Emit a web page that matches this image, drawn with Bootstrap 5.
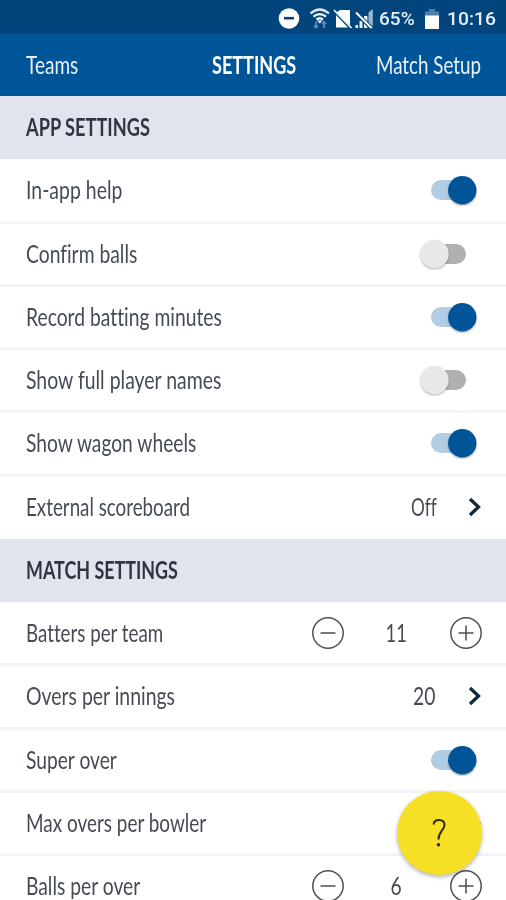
<!DOCTYPE html>
<html lang="en">
<head>
<meta charset="utf-8">
<meta name="viewport" content="width=device-width, initial-scale=1">
<title>Settings</title>
<link href="https://cdn.jsdelivr.net/npm/bootstrap@5.3.0/dist/css/bootstrap.min.css" rel="stylesheet">
<style>
  html, body { height: 900px; overflow: hidden; }
  body { font-family: Lato, "Open Sans", sans-serif; font-size: 24.5px; line-height: 30px; color: #454b55; background: #fff; font-variant-ligatures: none; }
  .screen { width: 506px; height: 900px; }
  .status-bar { height: 34px; background: #02457c; padding: 3px 10px 0 0; font-family: Roboto, sans-serif; font-size: 18.5px; font-weight: 500; color: #e6eef6; }
  .status-battery { margin: 0 7px 0 9px; }
  .title-bar { height: 62px; background: #005599; padding: 0 25px 0 26px; color: #e9f2fa; }
  .title-bar .title { font-weight: 700; color: #fff; width: 84px; margin-left: -15px; }
  .section-head { height: 63.25px; background: #e1e4ed; padding: 0 0 1px 26px; font-weight: 700; color: #2f3642; }
  .setting { height: 63.25px; padding: 0 24px 0 26px; border-top: 1px solid #f3f4f7; border-bottom: 2px solid #f3f4f7; }
  .section-head + .setting { border-top-color: #fff; }
  .setting.last { border-bottom-color: #fff; }
  .fit { display: inline-block; white-space: nowrap; transform-origin: left center; }
  .slot { display: inline-block; white-space: nowrap; }
  .toggle { width: 46px; height: 32px; margin-right: 5px; }
  .toggle.off { margin-right: 15px; width: 48px; }
  .count { width: 104px; padding-right: 1px; }
  .step-plus { margin-right: -1px; }
  .help-btn { position: absolute; left: 397px; top: 790.5px; width: 84.5px; height: 84.5px; background: #f6e026; box-shadow: 0 2px 4px rgba(0,0,0,.3); border: 0; }
</style>
</head>
<body>
<svg width="0" height="0" class="position-absolute">
  <defs>
    <filter id="soft" x="-30%" y="-30%" width="160%" height="160%"><feGaussianBlur stdDeviation="1.1"/></filter>
    <symbol id="on" viewBox="0 0 46 32">
      <rect x="0" y="6" width="36" height="20" rx="10" fill="#b0cde3"/>
      <circle cx="31.300" cy="17.800" r="14" fill="#000" opacity=".3" filter="url(#soft)"/>
      <circle cx="31.300" cy="16.300" r="14.200" fill="#005599"/>
    </symbol>
    <symbol id="off" viewBox="0 0 48 32">
      <rect x="12" y="6" width="35" height="20" rx="10" fill="#b0b0b0"/>
      <circle cx="15.500" cy="17.300" r="14" fill="#000" opacity=".3" filter="url(#soft)"/>
      <circle cx="15.500" cy="16" r="14.200" fill="#e8e8e8"/>
    </symbol>
    <symbol id="minus" viewBox="0 0 34 34"><circle cx="17" cy="17" r="15.200" fill="none" stroke="#4b4e54" stroke-width="1.500"/><path d="M9.500 17h15" stroke="#4b4e54" stroke-width="1.500"/></symbol>
    <symbol id="plus" viewBox="0 0 34 34"><circle cx="17" cy="17" r="15.200" fill="none" stroke="#4b4e54" stroke-width="1.500"/><path d="M9.500 17h15M17 9.500v15" stroke="#4b4e54" stroke-width="1.500"/></symbol>
    <symbol id="chev" viewBox="0 0 14 20"><path d="M2 2 10.500 10 2 18" fill="none" stroke="#12283f" stroke-width="3.300"/></symbol>
  </defs>
</svg>
<div class="screen position-relative overflow-hidden">
  <div class="status-bar d-flex align-items-center justify-content-end">
    <svg width="100" height="26" viewBox="276 5 100 26" style="margin-right:3px">
      <circle cx="289" cy="17.500" r="10.300" fill="#fff"/><path d="M284 17.200h10" stroke="#02457c" stroke-width="2.600"/>
      <g fill="none" stroke="#f4f8fc" stroke-width="2.300">
        <path d="M310.500 12.500q9.200-8 18.500 0" opacity=".9"/><path d="M313.500 15.700q6.200-5.200 12.500 0"/><path d="M316.500 18.600q3.200-2.700 6.500 0"/>
      </g>
      <path d="M317 19.500h5.500l-2.700 3z" fill="#fff"/>
      <path d="M316 20.500v6m-2-2 2 2.200 2-2.200M324 27v-6m-2 2 2-2.200 2 2.200" stroke="#5f8db4" stroke-width="1.800" fill="none"/>
      <path d="M340 9h10v15.500L336.500 11.500zM336 14v12.500h12z" fill="#fff"/><path d="M334 9 351.500 27" stroke="#fff" stroke-width="1.700"/>
      <path d="M368.500 11.500 372.800 8v19h-4.300z" fill="#9bb7cf"/>
      <path d="M364 15h3.400v12H364zM359.500 20h3v7h-3zM355.500 24h2.500v3h-2.500z" fill="#e8f0f7"/>
      <path d="M356 12 371.500 27" stroke="#02457c" stroke-width="4"/><path d="M356 11.500 371.500 27" stroke="#fff" stroke-width="1.900"/>
    </svg>
    <span class="slot" style="width:36px"><span class="fit" data-w="36">65%</span></span>
    <svg class="status-battery" width="16" height="22" viewBox="0 0 16 22"><path d="M5 1h6v2.500h4V8H1V3.500h4z" fill="#4f80a8"/><path d="M1 7.500h14V21H1z" fill="#fff"/></svg>
    <span class="slot" style="width:49px"><span class="fit" data-w="49">10:16</span></span>
  </div>
  <nav class="title-bar d-flex align-items-center justify-content-between">
    <span class="slot" style="width:120px"><span class="fit" data-w="52">Teams</span></span>
    <span class="slot title"><span class="fit" data-w="84">SETTINGS</span></span>
    <span class="slot" style="width:105px"><span class="fit" data-w="105">Match Setup</span></span>
  </nav>
  <main>
    <div class="section-head d-flex align-items-center"><span class="fit" data-w="124">APP SETTINGS</span></div>
    <div class="setting d-flex align-items-center justify-content-between"><span class="fit" data-w="96">In-app help</span><svg class="toggle"><use href="#on"/></svg></div>
    <div class="setting d-flex align-items-center justify-content-between"><span class="fit" data-w="111">Confirm balls</span><svg class="toggle off"><use href="#off"/></svg></div>
    <div class="setting d-flex align-items-center justify-content-between"><span class="fit" data-w="196">Record batting minutes</span><svg class="toggle"><use href="#on"/></svg></div>
    <div class="setting d-flex align-items-center justify-content-between"><span class="fit" data-w="195">Show full player names</span><svg class="toggle off"><use href="#off"/></svg></div>
    <div class="setting d-flex align-items-center justify-content-between"><span class="fit" data-w="170">Show wagon wheels</span><svg class="toggle"><use href="#on"/></svg></div>
    <div class="setting last d-flex align-items-center"><span class="fit me-auto" data-w="164">External scoreboard</span><span class="slot" style="width:57px"><span class="fit" data-w="26">Off</span></span><svg width="14" height="20"><use href="#chev"/></svg></div>
    <div class="section-head d-flex align-items-center"><span class="fit" data-w="152">MATCH SETTINGS</span></div>
    <div class="setting d-flex align-items-center"><span class="fit me-auto" data-w="137">Batters per team</span><svg width="34" height="34"><use href="#minus"/></svg><span class="count text-center"><span class="fit" data-w="21" data-mid>11</span></span><svg class="step-plus" width="34" height="34"><use href="#plus"/></svg></div>
    <div class="setting d-flex align-items-center"><span class="fit me-auto" data-w="149">Overs per innings</span><span class="slot" style="width:55px"><span class="fit" data-w="22">20</span></span><svg width="14" height="20"><use href="#chev"/></svg></div>
    <div class="setting d-flex align-items-center justify-content-between"><span class="fit" data-w="91">Super over</span><svg class="toggle"><use href="#on"/></svg></div>
    <div class="setting d-flex align-items-center"><span class="fit me-auto" data-w="180">Max overs per bowler</span><svg width="14" height="20"><use href="#chev"/></svg></div>
    <div class="setting d-flex align-items-center"><span class="fit me-auto" data-w="114">Balls per over</span><svg width="34" height="34"><use href="#minus"/></svg><span class="count text-center"><span class="fit" data-w="11" data-mid>6</span></span><svg class="step-plus" width="34" height="34"><use href="#plus"/></svg></div>
  </main>
  <button class="help-btn rounded-circle p-0 d-flex align-items-center justify-content-center" aria-label="Help">
    <svg width="16" height="30" viewBox="0 0 16 30"><path d="M2.500 6.500C3 3 5 2 8 2c3.300 0 5.500 1.800 5.500 5 0 5-6 6.500-6 14.500" fill="none" stroke="#2c2a14" stroke-width="2"/><circle cx="7.500" cy="26.800" r="1.800" fill="#2c2a14"/></svg>
  </button>
</div>
<script src="https://cdn.jsdelivr.net/npm/bootstrap@5.3.0/dist/js/bootstrap.bundle.min.js"></script>
<script>
  document.querySelectorAll('.fit').forEach(function (el) {
    if (el.hasAttribute('data-mid')) el.style.transformOrigin = 'center';
    el.style.transform = 'scaleX(' + (el.dataset.w / el.offsetWidth) + ')';
  });
</script>
</body>
</html>
